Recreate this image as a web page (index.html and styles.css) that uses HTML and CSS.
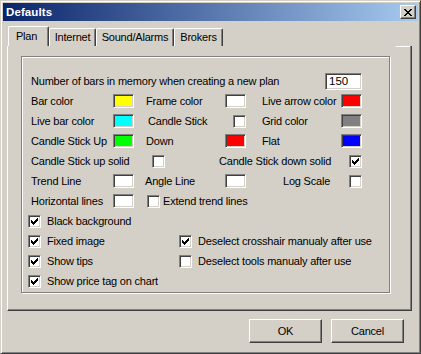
FILE: index.html
```html
<!DOCTYPE html>
<html>

<head>
    <meta charset="utf-8" />
    <title>Defaults</title>
    <link rel="stylesheet" href="styles.css">
</head>

<body>
    <div class="window">
        <div class="titlebar">
            <span class="title">Defaults</span>
            <span class="close">
                <svg width="8" height="7" viewBox="0 0 8 7" shape-rendering="crispEdges"><path d="M0 0h2v1h-2z M6 0h2v1h-2z M1 1h2v1h-2z M5 1h2v1h-2z M2 2h4v1h-4z M3 3h2v1h-2z M2 4h4v1h-4z M1 5h2v1h-2z M5 5h2v1h-2z M0 6h2v1h-2z M6 6h2v1h-2z" fill="#000" /></svg>
            </span>
        </div>
        <div class="client">
            <ul class="tabs">
                <li class="plan current">Plan</li>
                <li class="internet">Internet</li>
                <li class="sound">Sound/Alarms</li>
                <li class="brokers">Brokers</li>
            </ul>
            <div class="panel">
                <div class="group">
                    <div class="row bars">
                        <span>Number of bars in memory when creating a new plan</span>
                        <span class="edit">150</span>
                    </div>
                    <div class="row colors">
                        <span>Bar color</span>
                        <i class="swatch yellow"></i>
                        <span>Frame color</span>
                        <i class="swatch"></i>
                        <span>Live arrow color</span>
                        <i class="swatch red"></i>
                    </div>
                    <div class="row colors">
                        <span>Live bar color</span>
                        <i class="swatch cyan"></i>
                        <span class="nudge">Candle Stick</span>
                        <i class="check shift"></i>
                        <span>Grid color</span>
                        <i class="swatch gray"></i>
                    </div>
                    <div class="row colors">
                        <span>Candle Stick Up</span>
                        <i class="swatch green"></i>
                        <span>Down</span>
                        <i class="swatch red"></i>
                        <span>Flat</span>
                        <i class="swatch blue"></i>
                    </div>
                    <div class="row solid">
                        <span>Candle Stick up solid</span>
                        <i class="check"></i>
                        <span>Candle Stick down solid</span>
                        <i class="check"><svg width="7" height="7" viewBox="0 0 7 7" shape-rendering="crispEdges"><path d="M0 2h1v3h-1z M1 3h1v3h-1z M2 4h1v3h-1z M3 3h1v3h-1z M4 2h1v3h-1z M5 1h1v3h-1z M6 0h1v3h-1z" /></svg></i>
                    </div>
                    <div class="row lines">
                        <span>Trend Line</span>
                        <i class="swatch"></i>
                        <span>Angle Line</span>
                        <i class="swatch"></i>
                        <span>Log Scale</span>
                        <i class="check"></i>
                    </div>
                    <div class="row extend">
                        <span>Horizontal lines</span>
                        <i class="swatch"></i>
                        <i class="check"></i>
                        <span>Extend trend lines</span>
                    </div>
                    <div class="row checks">
                        <span class="opt"><i class="check"><svg width="7" height="7" viewBox="0 0 7 7" shape-rendering="crispEdges"><path d="M0 2h1v3h-1z M1 3h1v3h-1z M2 4h1v3h-1z M3 3h1v3h-1z M4 2h1v3h-1z M5 1h1v3h-1z M6 0h1v3h-1z" /></svg></i>Black background</span>
                    </div>
                    <div class="row checks">
                        <span class="opt"><i class="check"><svg width="7" height="7" viewBox="0 0 7 7" shape-rendering="crispEdges"><path d="M0 2h1v3h-1z M1 3h1v3h-1z M2 4h1v3h-1z M3 3h1v3h-1z M4 2h1v3h-1z M5 1h1v3h-1z M6 0h1v3h-1z" /></svg></i>Fixed image</span>
                        <span class="opt"><i class="check"><svg width="7" height="7" viewBox="0 0 7 7" shape-rendering="crispEdges"><path d="M0 2h1v3h-1z M1 3h1v3h-1z M2 4h1v3h-1z M3 3h1v3h-1z M4 2h1v3h-1z M5 1h1v3h-1z M6 0h1v3h-1z" /></svg></i>Deselect crosshair manualy after use</span>
                    </div>
                    <div class="row checks">
                        <span class="opt"><i class="check"><svg width="7" height="7" viewBox="0 0 7 7" shape-rendering="crispEdges"><path d="M0 2h1v3h-1z M1 3h1v3h-1z M2 4h1v3h-1z M3 3h1v3h-1z M4 2h1v3h-1z M5 1h1v3h-1z M6 0h1v3h-1z" /></svg></i>Show tips</span>
                        <span class="opt"><i class="check"></i>Deselect tools manualy after use</span>
                    </div>
                    <div class="row checks">
                        <span class="opt"><i class="check"><svg width="7" height="7" viewBox="0 0 7 7" shape-rendering="crispEdges"><path d="M0 2h1v3h-1z M1 3h1v3h-1z M2 4h1v3h-1z M3 3h1v3h-1z M4 2h1v3h-1z M5 1h1v3h-1z M6 0h1v3h-1z" /></svg></i>Show price tag on chart</span>
                    </div>
                </div>
            </div>
            <div class="buttons">
                <span class="btn">OK</span>
                <span class="btn">Cancel</span>
            </div>
        </div>
    </div>
</body>

</html>
```

FILE: styles.css
```css
body,
ul,
li
{
    margin: 0;
    padding: 0;
}

ul
{
    list-style-type: none;
}

body
{
    background: #d4d0c8;
    color: #000;
    font: 11px "Liberation Sans", Arial, sans-serif;
    letter-spacing: -0.2px;
}

.window
{
    box-sizing: border-box;
    display: flex;
    flex-direction: column;
    width: 421px;
    height: 354px;
    padding: 2px;
    background: #d4d0c8;
    border: 1px solid;
    border-color: #d4d0c8 #404040 #404040 #d4d0c8;
    box-shadow: inset 1px 1px #fff, inset -1px -1px #808080;
}

/* title bar */
.titlebar
{
    display: flex;
    align-items: center;
    justify-content: space-between;
    height: 18px;
    margin-bottom: 1px;
    padding: 0 2px 0 3px;
    background: linear-gradient(to right, #0a246a, #a6caf0);
}

    .titlebar .title
    {
        color: #fff;
        font-weight: bold;
        font-size: 11.5px;
        letter-spacing: 0.1px;
    }

    .titlebar .close
    {
        box-sizing: border-box;
        display: flex;
        align-items: center;
        justify-content: center;
        width: 16px;
        height: 14px;
        background: #d4d0c8;
        border: 1px solid;
        border-color: #fff #404040 #404040 #fff;
        box-shadow: inset -1px -1px #808080;
    }

.client
{
    flex: 1;
    padding: 4px 0 0 4px;
}

/* tabs */
.tabs
{
    display: flex;
    align-items: flex-end;
    height: 20px;
    margin-left: 1px;
}

    .tabs li
    {
        box-sizing: border-box;
        height: 18px;
        padding-top: 2px;
        text-align: center;
        border-top: 1px solid #fff;
        border-left: 1px solid #fff;
        border-right: 1px solid #404040;
        border-radius: 2px 2px 0 0;
        box-shadow: inset -1px 0 #808080;
    }

        .tabs li.current
        {
            height: 20px;
            padding: 3px 4px 0 0;
        }

    .tabs .plan { width: 41px; }
    .tabs .internet { width: 47px; }
    .tabs .sound { width: 78px; }
    .tabs .brokers { width: 49px; }

.panel
{
    box-sizing: border-box;
    width: 405px;
    height: 265px;
    padding: 10px 0 0 13px;
    border-left: 1px solid #fff;
    border-right: 1px solid #404040;
    border-bottom: 1px solid #404040;
    background: linear-gradient(#fff, #fff) no-repeat right top / 15px 1px;
    box-shadow: inset -1px -1px #808080;
}

.group
{
    box-sizing: border-box;
    width: 369px;
    height: 237px;
    padding: 14px 0 0 9px;
    border: 1px solid #808080;
    box-shadow: 1px 1px #fff, inset 1px 1px #fff;
}

/* form rows */
.row
{
    display: grid;
    align-items: center;
    height: 20px;
    white-space: nowrap;
}

    .row.bars { grid-template-columns: 294px auto; }
    .row.colors { grid-template-columns: 82px 33px 79px 37px 79px auto; }
    .row.solid { grid-template-columns: 121px 67px 130px auto; }
    .row.lines { grid-template-columns: 82px 32px 80px 58px 66px auto; }
    .row.extend { grid-template-columns: 82px 34px 16px auto; }

    .row.checks
    {
        grid-template-columns: 151px auto;
        margin-left: -3px;
    }

.nudge
{
    padding-left: 2px;
}

.opt
{
    display: flex;
    align-items: center;
    gap: 6px;
}

.edit,
.swatch,
.check
{
    box-sizing: border-box;
    display: block;
    background: #fff;
    border: 1px solid;
    border-color: #808080 #fff #fff #808080;
    box-shadow: inset 1px 1px #404040, inset -1px -1px #d4d0c8;
}

.edit
{
    width: 37px;
    height: 17px;
    padding-left: 3px;
    line-height: 15px;
    font-size: 11.5px;
    letter-spacing: 0;
}

.swatch
{
    width: 21px;
    height: 14px;
}

    .swatch.yellow { background: #ff0; }
    .swatch.cyan { background: #0ff; }
    .swatch.green { background: #0f0; }
    .swatch.red { background: #f00; }
    .swatch.gray { background: #808080; }
    .swatch.blue { background: #00f; }

.check
{
    display: flex;
    align-items: center;
    justify-content: center;
    width: 13px;
    height: 13px;
}

    .check.shift
    {
        margin-left: 8px;
    }

/* buttons */
.buttons
{
    display: flex;
    justify-content: flex-end;
    gap: 9px;
    margin-top: 8px;
    padding-right: 14px;
}

    .buttons .btn
    {
        box-sizing: border-box;
        display: flex;
        align-items: center;
        justify-content: center;
        width: 73px;
        height: 24px;
        border: 1px solid;
        border-color: #fff #404040 #404040 #fff;
        box-shadow: inset -1px -1px #808080;
    }
```
